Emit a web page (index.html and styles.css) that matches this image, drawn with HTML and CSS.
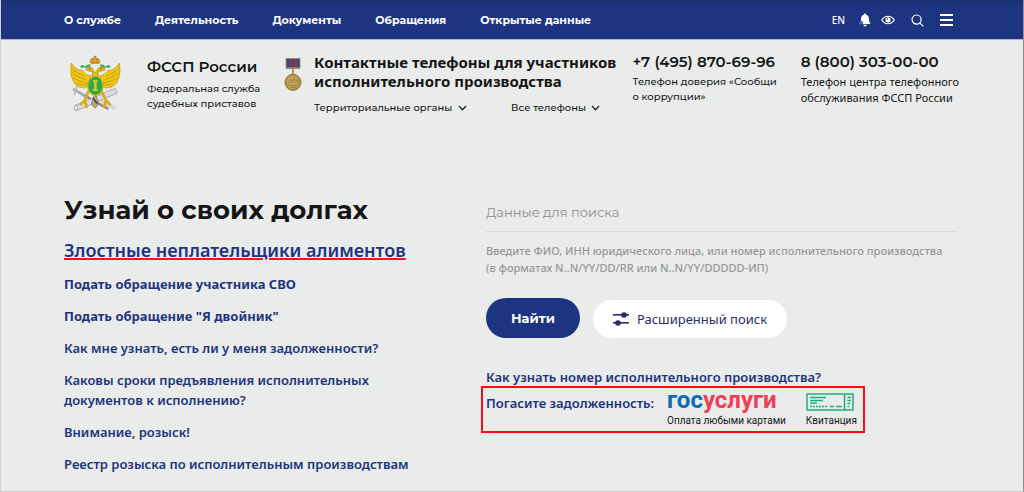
FILE: index.html
```html
<!DOCTYPE html>
<html lang="ru">
<head>
    <meta charset="UTF-8">
    <meta name="viewport" content="width=device-width, initial-scale=1.0">
    <title>ФССП России</title>
    <link rel="stylesheet" href="styles.css">
</head>
<body>

    <div class="topbar">
        <nav class="menu">
            <a href="#">О службе</a>
            <a href="#">Деятельность</a>
            <a href="#">Документы</a>
            <a href="#">Обращения</a>
            <a href="#">Открытые данные</a>
        </nav>
        <div class="tools">
            <a href="#" class="lang">EN</a>
            <button class="tool bell" aria-label="Уведомления">
                <svg width="12" height="14" viewBox="0 0 12 14">
                    <path d="M6 0.5C6.7 0.5 7 1 7 1.6C9.2 2.2 10 4 10 6C10 8.6 10.5 9.5 11.8 11H0.2C1.5 9.5 2 8.6 2 6C2 4 2.8 2.2 5 1.6C5 1 5.3 0.5 6 0.5Z" fill="#fff"/>
                    <path d="M4.3 11.8H7.7A1.7 1.7 0 0 1 4.3 11.8Z" fill="#fff"/>
                    <circle cx="2" cy="9.8" r="2" fill="#3b5fd0"/>
                </svg>
            </button>
            <button class="tool eye" aria-label="Версия для слабовидящих">
                <svg width="14" height="10" viewBox="0 0 14 10" fill="none" stroke="#fff">
                    <path d="M0.8 5C3.8 0 10.2 0 13.2 5C10.2 10 3.8 10 0.8 5Z" stroke-width="1.2"/>
                    <circle cx="7" cy="4.8" r="2.6" fill="#fff" stroke="none"/>
                    <circle cx="6.3" cy="4" r="0.8" fill="#1d3480" stroke="none"/>
                </svg>
            </button>
            <button class="tool search" aria-label="Поиск">
                <svg width="13" height="13" viewBox="0 0 14 14" fill="none" stroke="#fff" stroke-width="1.3" stroke-linecap="round">
                    <circle cx="6" cy="6" r="4.9"/>
                    <path d="M9.6 9.6L13 13"/>
                </svg>
            </button>
            <button class="tool" aria-label="Меню">
                <svg width="13" height="12" viewBox="0 0 13 12" fill="#fff">
                    <rect y="0" width="13" height="2"/>
                    <rect y="5" width="13" height="2"/>
                    <rect y="10" width="13" height="2"/>
                </svg>
            </button>
        </div>
    </div>

    <header class="header">
        <svg class="emblem" width="52" height="58" viewBox="0 0 156 174">
            <!-- sword and scrolls -->
            <path d="M12 104L112 160" stroke="#8f8f93" stroke-width="8" stroke-linecap="round"/>
            <path d="M12 104L40 120M20 96L14 118" stroke="#b9b9bd" stroke-width="5" stroke-linecap="round"/>
            <path d="M98 140L132 158" stroke="#d5d5d9" stroke-width="12" stroke-linecap="round"/>
            <path d="M14 152L136 100L142 114L22 166Z" fill="#dcdce1" stroke="#8c8c91" stroke-width="2"/>
            <ellipse cx="18" cy="159" rx="5" ry="8" fill="#eeeef2" stroke="#8c8c91" stroke-width="2"/>
            <!-- legs and tail -->
            <path d="M56 108L44 136L32 148M44 136L50 156M94 108L108 136L120 148M108 136L102 156" fill="none" stroke="#d7ad10" stroke-width="8" stroke-linecap="round"/>
            <path d="M75 112L64 148L75 160L86 148Z" fill="#b9a66a" stroke="#77715e" stroke-width="2"/>
            <path d="M69 130L82 146" stroke="#4c4840" stroke-width="5"/>
            <!-- wings -->
            <path d="M4 24C1 48 2 62 8 74C13 88 22 96 34 97C43 101 52 97 60 91L62 62C47 60 42 52 38 46C25 48 14 39 4 24Z" fill="#efc713" stroke="#b98e0c" stroke-width="2"/>
            <path d="M148 24C151 48 150 62 144 74C139 88 130 96 118 97C109 101 100 97 92 91L90 62C105 60 110 52 114 46C127 48 138 39 148 24Z" fill="#efc713" stroke="#b98e0c" stroke-width="2"/>
            <path d="M6 38C16 54 30 56 44 64M6 52C18 66 32 68 48 74M10 68C24 78 36 80 52 84M22 86C32 88 44 90 56 90M146 38C136 54 122 56 108 64M146 52C134 66 120 68 104 74M142 68C128 78 116 80 100 84M130 86C120 88 108 90 96 90" fill="none" stroke="#b38b10" stroke-width="2"/>
            <!-- heads and necks -->
            <path d="M66 68L68 50L56 48L46 44L55 37L66 38L76 54L86 38L97 37L106 44L96 48L84 50L86 68Z" fill="#e9bd13" stroke="#a9820e" stroke-width="2"/>
            <circle cx="59" cy="42" r="2" fill="#333"/>
            <circle cx="93" cy="42" r="2" fill="#333"/>
            <!-- ribbons -->
            <path d="M30 34L38 30L46 35L54 28L64 30L58 36L48 39L40 37L34 39ZM122 34L114 30L106 35L98 28L88 30L94 36L104 39L112 37L118 39Z" fill="#24ad50"/>
            <!-- crown -->
            <path d="M62 24C58 13 66 8 75 10C84 8 92 13 88 24Z" fill="#e8a927" stroke="#a86e18" stroke-width="2"/>
            <path d="M75 2V10M71 5H79M68 12L70 23M82 12L80 23M63 24H87" stroke="#bd7a18" stroke-width="3"/>
            <path d="M52 34H58M92 34H98" stroke="#d28a20" stroke-width="4"/>
            <!-- shield -->
            <ellipse cx="76" cy="92" rx="23" ry="29" fill="#24ad50" stroke="#d6ae14" stroke-width="4"/>
            <path d="M69 75H83V80H80V103H84V108H68V103H72V80H69Z" fill="#e3c31b"/>
        </svg>

        <div class="brand">
            <div class="brand-name">ФССП России</div>
            <div class="small">Федеральная служба<br>судебных приставов</div>
        </div>

        <svg class="medal" width="18" height="34" viewBox="0 0 54 102">
            <rect x="6" y="1" width="42" height="31" fill="#59617c" stroke="#9a8a5a" stroke-width="2"/>
            <rect x="9" y="3" width="10" height="26" fill="#344a80"/>
            <rect x="19" y="3" width="8" height="26" fill="#8c344a"/>
            <rect x="27" y="3" width="4" height="26" fill="#354a83"/>
            <rect x="31" y="3" width="8" height="26" fill="#8c344a"/>
            <rect x="39" y="3" width="7" height="26" fill="#344a80"/>
            <path d="M6 30H48" stroke="#aa924d" stroke-width="4"/>
            <path d="M27 32V48" stroke="#94804a" stroke-width="5"/>
            <circle cx="27" cy="73" r="24" fill="#b39645" stroke="#8d7433" stroke-width="3"/>
            <circle cx="27" cy="73" r="18" fill="#c0a75c"/>
            <path d="M12 76L20 62L24 74L31 60L34 73L41 64L43 78M14 82H40M20 88H35" fill="none" stroke="#9a8144" stroke-width="3"/>
        </svg>

        <div class="contacts">
            <div class="contacts-title">Контактные телефоны для участников исполнительного производства</div>
            <div class="selects">
                <div class="dropdown">
                    <select aria-label="Территориальные органы">
                        <option>Территориальные органы</option>
                    </select>
                    <svg width="9" height="6" viewBox="0 0 9 6"><path d="M1 1L4.5 4.7L8 1" fill="none" stroke="#222" stroke-width="1.3"/></svg>
                </div>
                <div class="dropdown">
                    <select aria-label="Все телефоны">
                        <option>Все телефоны</option>
                    </select>
                    <svg width="9" height="6" viewBox="0 0 9 6"><path d="M1 1L4.5 4.7L8 1" fill="none" stroke="#222" stroke-width="1.3"/></svg>
                </div>
            </div>
        </div>

        <div class="phone">
            <a href="tel:+74958706996">+7 (495) 870-69-96</a>
            <div class="small">Телефон доверия «Сообщи<br>о коррупции»</div>
        </div>
        <div class="phone phone-center">
            <a href="tel:88003030000">8 (800) 303-00-00</a>
            <div class="note">Телефон центра телефонного<br>обслуживания ФССП России</div>
        </div>
    </header>

    <main class="main">
        <section class="debts">
            <h1>Узнай о своих долгах</h1>
            <a href="#" class="alimony">Злостные неплательщики алиментов</a>
            <a href="#" class="bold">Подать обращение участника СВО</a>
            <a href="#" class="bold">Подать обращение "Я двойник"</a>
            <a href="#">Как мне узнать, есть ли у меня задолженности?</a>
            <a href="#">Каковы сроки предъявления исполнительных<br>документов к исполнению?</a>
            <a href="#">Внимание, розыск!</a>
            <a href="#">Реестр розыска по исполнительным производствам</a>
        </section>

        <form class="search-form">
            <input type="text" id="query" placeholder="Данные для поиска">
            <label for="query">Введите ФИО, ИНН юридического лица, или номер исполнительного производства<br>(в форматах N..N/YY/DD/RR или N..N/YY/DDDDD-ИП)</label>
            <div class="buttons">
                <button type="submit" class="find">Найти</button>
                <button type="button" class="advanced">
                    <svg width="16" height="14" viewBox="0 0 16 14" fill="#292e68">
                        <rect y="2" width="16" height="1.6"/>
                        <rect y="10" width="16" height="1.6"/>
                        <circle cx="11" cy="3" r="2.8"/>
                        <circle cx="5" cy="11" r="2.8"/>
                    </svg>
                    Расширенный поиск
                </button>
            </div>
            <a href="#" class="how">Как узнать номер исполнительного производства?</a>
            <div class="pay">
                <span class="pay-title">Погасите задолженность:</span>
                <a href="#" class="pay-item">
                    <span class="gos"><span class="gos-blue">гос</span>услуги</span>
                    Оплата любыми картами
                </a>
                <a href="#" class="pay-item">
                    <svg width="48" height="18" viewBox="0 0 48 18" fill="none" stroke="#1fae79" stroke-width="1.5">
                        <rect x="1" y="1" width="46" height="16"/>
                        <path d="M38.5 1V17"/>
                        <path d="M4 4.5H20M4 7.5H17M4 10H11"/>
                        <path d="M4 13.5H21" stroke-dasharray="2 1"/>
                        <path d="M24 13.5H28M30 13.5H36"/>
                        <path d="M41.5 4.5H45M41.5 7.5H45M41.5 10.5H44M41.5 13.5H43"/>
                    </svg>
                    Квитанция
                </a>
            </div>
        </form>
    </main>

</body>
</html>
```
FILE: styles.css
```css
* {
    box-sizing: border-box;
}
body {
    margin: 0;
    min-height: 100vh;
    font-family: "Noto Sans", sans-serif;
    font-size: 13px;
    line-height: 20px;
    color: #151515;
    background: #eaeceb;
    border: 1px solid #cfd1d1;
    border-top: none;
    border-right-color: #8f9191;
}
a {
    color: inherit;
    text-decoration: none;
}
button {
    font: inherit;
    border: none;
    cursor: pointer;
}
svg {
    display: block;
    flex-shrink: 0;
}

/* Top bar */
.topbar {
    display: flex;
    justify-content: space-between;
    align-items: center;
    height: 40px;
    padding: 0 70px 0 63px;
    background: #1d3480;
    border-top: 1px solid #18306b;
    border-bottom: 1px solid #a9b4d6;
    color: #fff;
}
.menu {
    display: flex;
    gap: 34px;
    font-family: "Montserrat", "Inter", sans-serif;
    font-size: 11px;
    font-weight: 700;
}
.tools {
    display: flex;
    align-items: center;
}
.lang {
    font-size: 10px;
    font-weight: 500;
}
.tool {
    padding: 0;
    margin-left: 16px;
    background: none;
}
.bell {
    margin-left: 14px;
}
.eye {
    margin-left: 10px;
}

/* Header */
.header {
    display: flex;
    align-items: flex-start;
    padding: 15px 64px 0 69px;
}
.brand {
    margin: 2px 24px 0 25px;
    white-space: nowrap;
}
.brand-name {
    font-family: "Montserrat", "Inter", sans-serif;
    font-size: 15px;
    font-weight: 600;
    margin-bottom: 4px;
}
.small {
    font-family: "Montserrat", "Inter", sans-serif;
    font-size: 10px;
    font-weight: 500;
    line-height: 15px;
}
.medal {
    margin-top: 3px;
}
.contacts {
    flex: 1;
    margin: -2px 10px 0 12px;
}
.contacts-title {
    font-size: 15px;
    font-weight: 700;
    line-height: 19px;
}
.selects {
    display: flex;
    gap: 44px;
    margin-top: 10px;
}
.dropdown {
    display: flex;
    align-items: center;
    gap: 5px;
}
.dropdown select {
    appearance: none;
    padding: 0;
    border: none;
    background: none;
    color: inherit;
    font-family: "Montserrat", "Inter", sans-serif;
    font-size: 10px;
    font-weight: 500;
}
.phone {
    margin-top: -3px;
    white-space: nowrap;
}
.phone a {
    font-family: "Montserrat", "Inter", sans-serif;
    font-size: 15px;
    font-weight: 600;
}
.phone .small {
    margin-top: 2px;
}
.phone-center {
    margin-left: 24px;
}
.note {
    margin-top: 2px;
    font-size: 11px;
    line-height: 16px;
}

/* Main */
.main {
    display: grid;
    grid-template-columns: minmax(0, 422fr) minmax(0, 472fr);
    padding: 79px 65px 15px 63px;
}
.debts {
    display: flex;
    flex-direction: column;
    align-items: flex-start;
    gap: 12px;
    color: #1d3480;
    font-weight: 600;
}
.debts h1 {
    margin: 0;
    font-family: "Montserrat", "Inter", sans-serif;
    font-size: 26px;
    font-weight: 700;
    line-height: 34px;
    color: #151515;
}
.debts .alimony {
    font-size: 18px;
    line-height: 23px;
    text-decoration: underline;
    text-decoration-color: #f0141e;
    text-decoration-thickness: 2px;
}
.bold {
    font-weight: 700;
}

/* Search form */
.search-form {
    display: flex;
    flex-direction: column;
    align-items: flex-start;
}
.search-form input {
    width: 100%;
    height: 39px;
    padding: 0;
    border: none;
    border-bottom: 1px solid #d8d8d8;
    background: #ebebea;
    font-family: "Montserrat", "Inter", sans-serif;
    font-size: 13px;
}
.search-form input::placeholder {
    color: #8e8e8e;
}
.search-form label {
    margin-top: 10px;
    font-size: 11px;
    font-weight: 500;
    line-height: 17px;
    color: #979797;
    white-space: nowrap;
}
.buttons {
    display: flex;
    align-items: flex-end;
    gap: 13px;
    margin-top: 22px;
}
.find {
    padding: 10px 25px;
    border-radius: 20px;
    background: #1d3480;
    color: #fff;
    font-family: "Montserrat", "Inter", sans-serif;
    font-weight: 700;
}
.advanced {
    display: flex;
    align-items: center;
    gap: 8px;
    padding: 9px 20px;
    border-radius: 20px;
    background: #fff;
    color: #292e68;
}
.how {
    margin-top: 31px;
    color: #1d3480;
    font-weight: 600;
    line-height: 17px;
}
.pay {
    display: flex;
    align-items: flex-start;
    margin-left: -5px;
    padding: 2px 6px 4px 3px;
    border: 2px solid #fb0d0d;
}
.pay-title {
    margin: 3px 13px 0 0;
    color: #1d3480;
    font-weight: 600;
}
.pay-item {
    display: flex;
    flex-direction: column;
    justify-content: space-between;
    height: 37px;
    margin-right: 20px;
    font-family: "Roboto", sans-serif;
    font-size: 10px;
    line-height: 12px;
}
.gos {
    font-size: 24px;
    font-weight: 700;
    line-height: 20px;
    color: #ee3f58;
}
.gos-blue {
    color: #0f6ab4;
}
.pay-item:last-child {
    margin-right: 0;
    padding-top: 3px;
}
```
